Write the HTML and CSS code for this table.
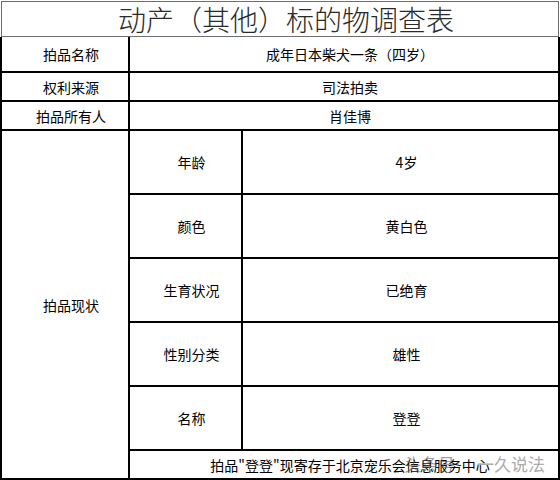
FILE: index.html
```html
<!DOCTYPE html>
<html lang="zh-CN">
<head>
<meta charset="utf-8">
<link rel="stylesheet" href="styles.css">
</head>
<body>
<div class="page">
  <div class="title"><span class="title-text">动产（其他）标的物调查表</span></div>
  <div class="grid">
    <div class="cell">拍品名称</div>
    <div class="cell span2">成年日本柴犬一条（四岁）</div>
    <div class="cell">权利来源</div>
    <div class="cell span2">司法拍卖</div>
    <div class="cell">拍品所有人</div>
    <div class="cell span2">肖佳博</div>
    <div class="cell status">拍品现状</div>
    <div class="cell">年龄</div>
    <div class="cell">4岁</div>
    <div class="cell">颜色</div>
    <div class="cell">黄白色</div>
    <div class="cell">生育状况</div>
    <div class="cell">已绝育</div>
    <div class="cell">性别分类</div>
    <div class="cell">雄性</div>
    <div class="cell">名称</div>
    <div class="cell">登登</div>
    <div class="cell span2">拍品"登登"现寄存于北京宠乐会信息服务中心</div>
  </div>
  <div class="watermark"><span class="wm1">头条号</span><span class="wm2">一久说法</span></div>
</div>
</body>
</html>
```

FILE: styles.css
```css
html, body {
  margin: 0;
  padding: 0;
  background: #fff;
}
.page {
  position: relative;
  width: 560px;
  height: 480px;
  overflow: hidden;
  font-family: "Noto Sans CJK SC", "Liberation Sans", sans-serif;
  color: #000;
}
.title {
  margin: 1px 1px 0 1px;
  height: 34px;
  border: 1px solid #6e6e6e;
  display: flex;
  align-items: center;
  justify-content: center;
  padding-left: 12px;
  color: #2a2a2a;
}
.title-text {
  font-size: 28px;
  line-height: 34px;
  font-weight: 300;
  white-space: nowrap;
}
.grid {
  display: grid;
  grid-template-columns: 126px 111px 315px;
  grid-template-rows: 34px 27px 27px 62px 62px 62px 62px 62px 27px;
  gap: 2px;
  padding: 0 2px 2px 2px;
  background: #000;
}
.cell {
  background: #fff;
  display: flex;
  align-items: center;
  justify-content: center;
  padding-left: 12px;
  font-size: 14px;
  line-height: 16px;
  white-space: nowrap;
}
.span2 {
  grid-column: 2 / 4;
}
.status {
  grid-column: 1;
  grid-row: 4 / 10;
}
.watermark {
  position: absolute;
  left: 404px;
  top: 454px;
  font-size: 17px;
  line-height: 20px;
  white-space: nowrap;
  display: flex;
  gap: 22px;
}
.wm1 {
  color: rgba(90, 90, 90, 0.6);
}
.wm2 {
  color: rgba(160, 160, 160, 0.9);
  text-shadow: 0 0 1px #fff;
}
```
